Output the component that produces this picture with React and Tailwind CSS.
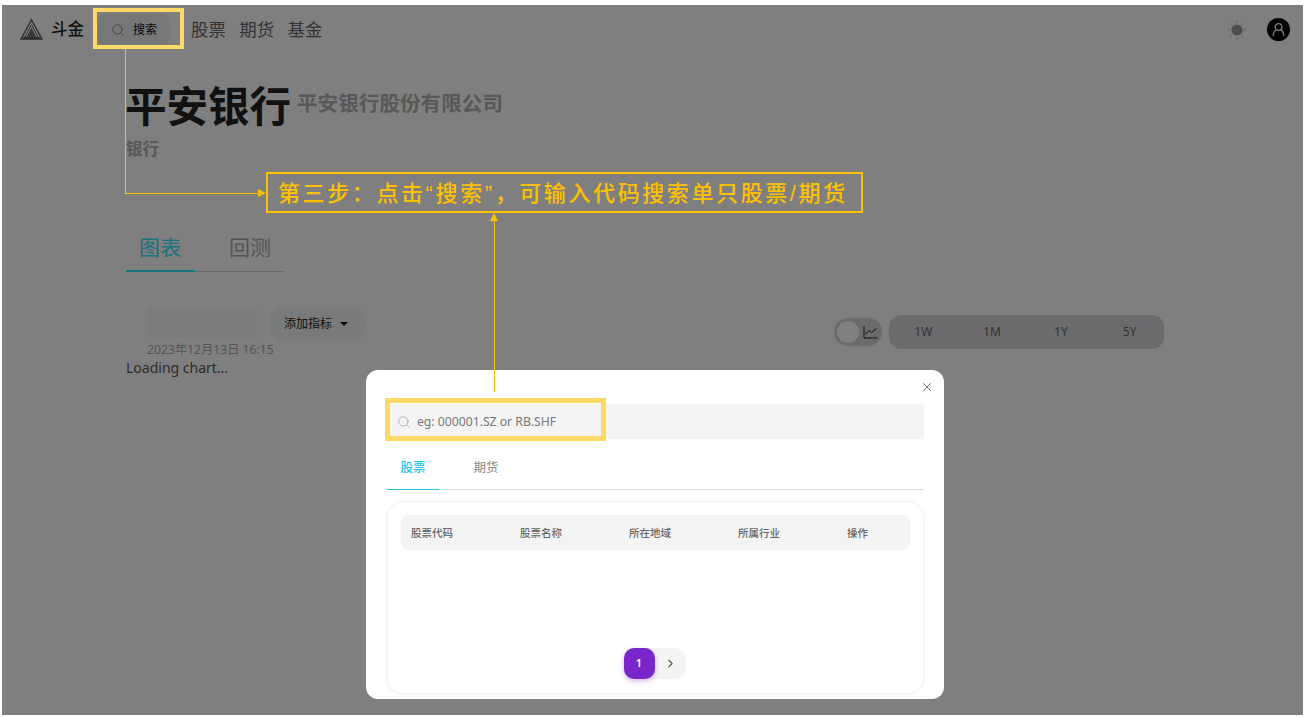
import React from 'react';
import { ChevronRight, Search, X } from 'lucide-react';

const cjk = { fontFamily: '"Noto Sans", "Noto Sans CJK SC", sans-serif' };

const columns = ['股票代码', '股票名称', '所在地域', '所属行业', '操作'];
const ranges = ['1W', '1M', '1Y', '5Y'];

const Logo = () => (
    <svg width="23" height="23" viewBox="0 0 24 24" fill="none" stroke="#555" strokeWidth="1.3">
        <path d="M12 2 L23 22 H1 Z" />
        <path d="M12 7 L19 20 H5 Z" strokeWidth="1" />
        <path d="M12 11 L16 19 H8 Z" fill="#777" stroke="#666" strokeWidth="1" />
        <path d="M3 21 H21" strokeWidth="2" />
    </svg>
);

const Sun = () => (
    <svg width="20" height="20" viewBox="0 0 20 20" fill="#9a9a9a" stroke="#9a9a9a" strokeWidth="1">
        <circle cx="10" cy="10" r="5.5" stroke="none" />
        <path d="M10 1 V2.5 M10 17.5 V19 M1 10 H2.5 M17.5 10 H19 M3.6 3.6 L4.6 4.6 M15.4 15.4 L16.4 16.4 M3.6 16.4 L4.6 15.4 M15.4 4.6 L16.4 3.6" />
    </svg>
);

const Avatar = () => (
    <div className="flex h-[23px] w-[23px] items-center justify-center rounded-full bg-black">
        <svg width="15" height="15" viewBox="0 0 15 15" fill="none" stroke="#fff" strokeWidth="1.3">
            <circle cx="7.5" cy="5" r="3.4" />
            <path d="M2.2 14 C2.4 10.5 4 8.6 5.4 8.2 M12.8 14 C12.6 10.5 11 8.6 9.6 8.2" />
        </svg>
    </div>
);

const LineIcon = () => (
    <svg width="15" height="14" viewBox="0 0 15 14" fill="none" stroke="#222" strokeWidth="1">
        <path d="M1 1 V13 H14.5" />
        <path d="M2.5 9.5 L6 5.5 L8.5 7.5 L13.5 3.5" />
    </svg>
);

const Dialog = () => (
    <div className="absolute left-[366px] top-[370px] h-[329px] w-[578px] rounded-xl bg-white pl-[21px] pr-[20px] pt-[34px]" style={cjk}>
        <button className="absolute right-[10px] top-[10px] text-[#666]">
            <X size={14} strokeWidth={1.6} />
        </button>
        <div className="flex h-[35px] items-center gap-[6px] bg-[#f4f4f4] pl-[10px] pt-[1px] text-[12.2px] text-[#777]">
            <Search size={14} strokeWidth={1.2} className="text-[#999]" />
            <span>eg: 000001.SZ or RB.SHF</span>
        </div>
        <div className="mt-[12px] flex h-[39px] border-b border-[#d9d9d9] text-[12.5px]">
            <div className="-mb-px w-[52px] border-b border-[#29c5e6] pt-[8px] text-center font-medium text-[#29c5e6]">股票</div>
            <div className="ml-[21px] w-[52px] pt-[8px] text-center text-[#888]">期货</div>
        </div>
        <div className="mt-[11px] flex h-[193px] flex-col rounded-2xl border border-[#f1f1f1] px-[13px] pt-[13px] shadow-[0_1px_4px_rgba(0,0,0,0.05)]">
            <div className="grid h-[35px] grid-cols-[109px_109px_109px_109px_1fr] items-center rounded-lg bg-[#f4f4f4] pl-[10px] pt-[2px] text-[10.5px] font-medium text-[#666]">
                {columns.map((col) => (
                    <span key={col}>{col}</span>
                ))}
            </div>
            <div className="mt-[98px] flex justify-center pr-[2px]">
                <div className="flex h-[31px] w-[62px] items-center rounded-xl bg-[#f4f4f4]">
                    <div className="flex h-[31px] w-[31px] items-center justify-center rounded-[10px] bg-[#7b26c9] text-[11px] font-semibold text-white shadow-[0_2px_5px_rgba(123,38,201,0.35)]">1</div>
                    <ChevronRight size={13} strokeWidth={2.2} className="ml-[9px] text-[#555]" />
                </div>
            </div>
        </div>
    </div>
);

const Annotations = () => (
    <>
        {/* yellow highlights */}
        <div className="absolute left-[93px] top-[8px] h-[41px] w-[91px] border-[4px] border-[#ffd966]" />
        <div className="absolute left-[385px] top-[398px] h-[43px] w-[221px] border-[5px] border-[#ffd966]" />

        {/* connector from search button */}
        <div className="absolute left-[125px] top-[49px] h-[145px] w-[133px] border-b border-l border-[#ffc000]" />
        <div className="absolute left-[258px] top-[189px] h-0 w-0 border-y-[4px] border-l-[8px] border-y-transparent border-l-[#ffc000]" />

        {/* connector from dialog input */}
        <div className="absolute left-[494px] top-[221px] h-[171px] w-px bg-[#ffc000]" />
        <div className="absolute left-[490px] top-[213px] h-0 w-0 border-x-[4px] border-b-[8px] border-x-transparent border-b-[#ffc000]" />

        <div
            className="absolute left-[266px] top-[172px] flex h-[41px] w-[597px] items-center border-2 border-[#ffc000] pl-[10px] pt-[1px] text-[22px] font-medium tracking-[2.6px] whitespace-nowrap text-[#ffc000]"
            style={{ fontFamily: '"Liberation Sans", "Noto Sans CJK SC", sans-serif' }}
        >
            第三步：点击“搜索”，可输入代码搜索单只股票/期货
        </div>
    </>
);

const App = () => {
    return (
        <div className="relative h-screen w-full overflow-hidden bg-white pb-[3px] pl-[2px] pr-[3px] pt-[5px]" style={cjk}>
            <div className="relative h-full overflow-hidden bg-white">
                <header className="flex h-[50px] items-center pb-[1px] pl-[18px] pr-[13px]">
                    <Logo />
                    <span className="ml-[8px] text-[16.5px] font-medium text-[#222]">斗金</span>
                    <div className="ml-[14px] flex h-[32px] w-[72px] items-center gap-[8px] rounded-lg bg-[#eceff1] pl-[13px] text-[12px] text-[#111]">
                        <Search size={14} strokeWidth={1.2} className="text-[#666]" />
                        <span>搜索</span>
                    </div>
                    <nav className="ml-[21px] flex gap-[13.5px] text-[17.4px] text-[#666]">
                        <span>股票</span>
                        <span>期货</span>
                        <span>基金</span>
                    </nav>
                    <div className="ml-auto flex items-center gap-[20px]">
                        <Sun />
                        <Avatar />
                    </div>
                </header>

                <main className="pl-[124px] pr-[139px]">
                    <div className="mt-[22px] flex items-end">
                        <h1 className="-ml-[1px] text-[41.5px] leading-[58px] font-bold text-[#222]">平安银行</h1>
                        <h2 className="mb-[16px] ml-[6px] text-[20.6px] font-bold text-[#b0b0b0]">平安银行股份有限公司</h2>
                    </div>
                    <div className="mt-[2px] text-[16.5px] font-bold text-[#b0b0b0]">银行</div>

                    <div className="mt-[70px] flex h-[40px] w-[158px] border-b border-[#ccc] text-[21px]">
                        <div className="-mb-px w-[69px] border-b-2 border-[#34e4ff] pl-[13px] text-[#34e4ff]">图表</div>
                        <div className="ml-[34px] text-[#aaa]">回测</div>
                    </div>

                    <div className="mt-[36px] flex items-start">
                        <div className="ml-[21px] w-[110px]">
                            <div className="h-[30px] w-[110px] bg-[#f4f9f6]" />
                            <div className="mt-[3px] text-[12.2px] whitespace-nowrap text-[#aaa]">2023年12月13日 16:15</div>
                        </div>
                        <button className="ml-[13px] -mt-px flex h-[34px] w-[95px] items-center gap-[8px] rounded-xl bg-[#f2f5f4] pl-[14px] text-[12px] text-[#222]">
                            添加指标
                            <span className="h-0 w-0 border-x-[4px] border-t-[4px] border-x-transparent border-t-[#111]" />
                        </button>
                        <div className="ml-auto mt-[7px] flex items-center gap-[7px]">
                            <div className="flex h-[28px] w-[48px] items-center rounded-full bg-[#d6d6da] pl-[3px]">
                                <div className="h-[22px] w-[22px] rounded-full bg-white" />
                                <div className="ml-[4px]"><LineIcon /></div>
                            </div>
                            <div className="grid h-[34px] w-[275px] grid-cols-4 items-center rounded-xl bg-[#d6d6da] text-center text-[12px] text-[#666]">
                                {ranges.map((r) => (
                                    <span key={r}>{r}</span>
                                ))}
                            </div>
                        </div>
                    </div>
                    <div className="-mt-[2px] text-[14px] text-[#555]">Loading chart...</div>
                </main>

                <div className="absolute inset-0 bg-black/50" />
            </div>

            <Dialog />
            <Annotations />
        </div>
    );
};

export default App;
